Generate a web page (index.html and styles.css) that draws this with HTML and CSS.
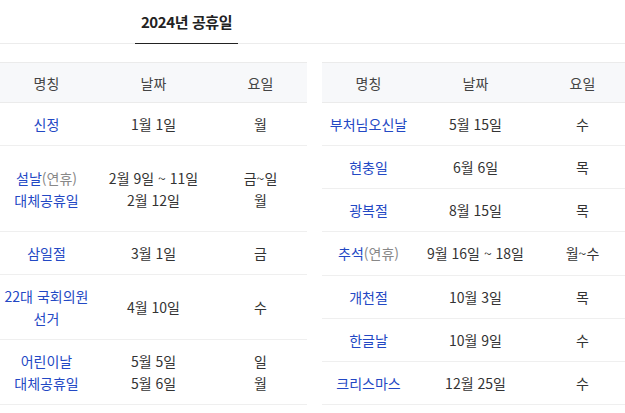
FILE: index.html
```html
<!DOCTYPE html>
<html lang="ko">
<head>
<meta charset="utf-8">
<link rel="stylesheet" href="styles.css">
</head>
<body>
<div class="tabs">
  <div class="tab active">2024년 공휴일</div>
</div>
<div class="tables">
  <table class="hol">
    <colgroup><col class="c1"><col class="c2"><col class="c3"></colgroup>
    <thead><tr><th>명칭</th><th>날짜</th><th>요일</th></tr></thead>
    <tbody>
      <tr><td class="name">신정</td><td>1월 1일</td><td>월</td></tr>
      <tr class="tall"><td class="name">설날<span class="sub">(연휴)</span><br>대체공휴일</td><td>2월 9일 ~ 11일<br>2월 12일</td><td>금~일<br>월</td></tr>
      <tr><td class="name">삼일절</td><td>3월 1일</td><td>금</td></tr>
      <tr><td class="name">22대 국회의원<br>선거</td><td>4월 10일</td><td>수</td></tr>
      <tr><td class="name">어린이날<br>대체공휴일</td><td>5월 5일<br>5월 6일</td><td>일<br>월</td></tr>
    </tbody>
  </table>
  <table class="hol">
    <colgroup><col class="c1"><col class="c2"><col class="c3"></colgroup>
    <thead><tr><th>명칭</th><th>날짜</th><th>요일</th></tr></thead>
    <tbody>
      <tr><td class="name">부처님오신날</td><td>5월 15일</td><td>수</td></tr>
      <tr><td class="name">현충일</td><td>6월 6일</td><td>목</td></tr>
      <tr><td class="name">광복절</td><td>8월 15일</td><td>목</td></tr>
      <tr><td class="name">추석<span class="sub">(연휴)</span></td><td>9월 16일 ~ 18일</td><td>월~수</td></tr>
      <tr><td class="name">개천절</td><td>10월 3일</td><td>목</td></tr>
      <tr><td class="name">한글날</td><td>10월 9일</td><td>수</td></tr>
      <tr><td class="name">크리스마스</td><td>12월 25일</td><td>수</td></tr>
    </tbody>
  </table>
</div>
</body>
</html>
```
FILE: styles.css
```css
html, body {
  margin: 0;
  padding: 0;
  background: #fff;
  overflow: hidden;
}
body {
  font-family: "Noto Sans CJK KR", "Noto Sans", sans-serif;
  color: #333;
  width: 625px;
  height: 413px;
}
.tabs {
  display: flex;
  height: 43px;
  border-bottom: 1px solid #ececec;
  padding-left: 135px;
}
.tab {
  width: 103px;
  box-sizing: border-box;
  text-align: center;
  font-size: 15px;
  font-weight: 700;
  letter-spacing: -0.4px;
  line-height: 43px;
  color: #222;
}
.tab.active {
  border-bottom: 1px solid #222;
  height: 44px;
  margin-bottom: -1px;
}
.tables {
  display: flex;
  gap: 15px;
  margin-top: 18px;
  width: 640px;
}
.hol {
  width: 307px;
  flex: none;
  border-collapse: collapse;
  table-layout: fixed;
  font-size: 14px;
  line-height: 22px;
}
.c1 { width: 93px; }
.c2 { width: 121px; }
.c3 { width: 93px; }
.hol th {
  background: #f7f8fa;
  font-weight: 400;
  color: #444;
  padding: 9px 0 8px;
  border-top: 1px solid #ebebeb;
  border-bottom: 1px solid #ebebeb;
}
.hol td {
  text-align: center;
  padding: 10px 0;
  border-bottom: 1px solid #efefef;
  white-space: nowrap;
}
.hol td.name {
  color: #2348c4;
  white-space: normal;
}
.hol tr.tall td {
  padding: 21px 0 20px;
}
.sub {
  color: #888;
}
```
